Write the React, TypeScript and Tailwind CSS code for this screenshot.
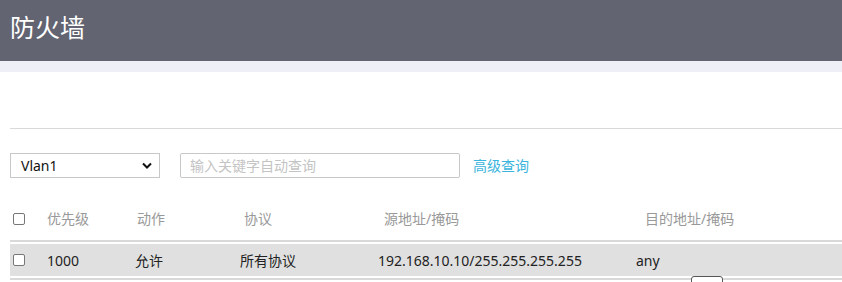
import React from "react";

const cjk = { fontFamily: '"Noto Sans", "Noto Sans CJK SC", sans-serif' };

export default function App() {
  return (
    <div className="w-[842px] h-[282px] overflow-hidden bg-white relative" style={cjk}>
      <div className="h-[61px] bg-[#626472] flex items-center pl-[10px]">
        <span className="text-white text-[25px] leading-none mt-[-6px]">防火墙</span>
      </div>
      <div className="h-[11px] bg-[#efeff7]" />
      <div className="pl-[10px]">
        <div className="h-[56px]" />
        <div className="h-px bg-[#d9d9d9]" />
        <div className="h-[24px]" />
        <div className="flex items-center h-[25px]">
          <div className="w-[150px] h-[25px] border border-[#c8c8c8] flex items-center justify-between pl-[10px] pr-[7px] text-[14px] text-[#111]">
            <span>Vlan1</span>
            <svg width="10" height="7" viewBox="0 0 10 7"><path d="M1 1.5 L5 5.5 L9 1.5" stroke="#111" strokeWidth="2" fill="none" /></svg>
          </div>
          <div className="ml-[20px] w-[280px] h-[25px] border border-[#c8c8c8] rounded-[2px] flex items-center pl-[9px] text-[14px] text-[#c4c4c4]">
            输入关键字自动查询
          </div>
          <span className="ml-[13px] text-[14px] text-[#3ab4dd]">高级查询</span>
        </div>
        <div className="h-[24px]" />
        <div className="flex items-center h-[33px] text-[14px] text-[#999]">
          <div className="w-[37px] pl-[3px] flex items-center">
            <span className="w-[12px] h-[12px] border border-[#777] rounded-[2px] bg-white" />
          </div>
          <div className="w-[90px]">优先级</div>
          <div className="w-[107px]">动作</div>
          <div className="w-[140px]">协议</div>
          <div className="w-[261px]">源地址/掩码</div>
          <div>目的地址/掩码</div>
        </div>
        <div className="h-[2px] bg-[#d9d9d9] mt-[5px]" />
        <div className="h-[2px]" />
        <div className="flex items-center h-[32px] bg-[#e0e0e0] text-[14px] text-[#222]">
          <div className="w-[37px] pl-[3px] flex items-center">
            <span className="w-[12px] h-[12px] border border-[#777] rounded-[2px] bg-white" />
          </div>
          <div className="w-[88px]">1000</div>
          <div className="w-[105px]">允许</div>
          <div className="w-[138px]">所有协议</div>
          <div className="w-[258px]">192.168.10.10/255.255.255.255</div>
          <div>any</div>
        </div>
        <div className="h-[2px]" />
        <div className="h-[2px] bg-[#d9d9d9]" />
      </div>
      <div className="absolute left-[691px] top-[276px] w-[32px] h-[20px] border border-[#555] rounded-t-[3px] bg-white" />
    </div>
  );
}
